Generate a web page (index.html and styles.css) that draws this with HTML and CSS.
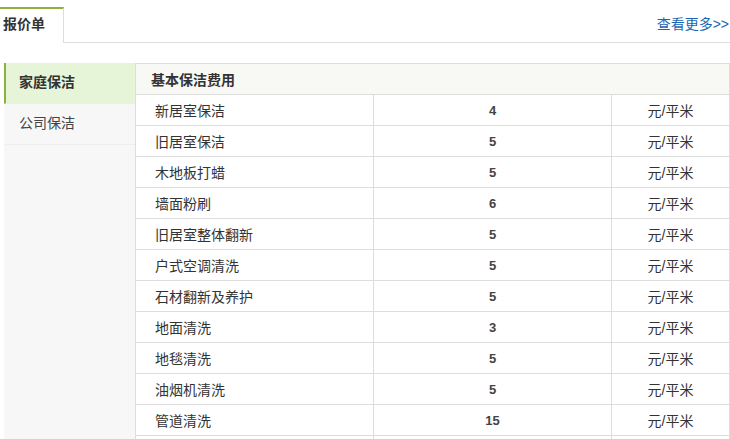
FILE: index.html
```html
<!DOCTYPE html>
<html lang="zh-CN">
<head>
<meta charset="utf-8">
<title>报价单</title>
<link rel="stylesheet" href="styles.css">
</head>
<body>
<div class="tabbar">
  <div class="tab">报价单</div>
  <div class="tab-rest"><a class="more" href="#">查看更多&gt;&gt;</a></div>
</div>
<div class="main">
  <ul class="side">
    <li class="side-item active">家庭保洁</li>
    <li class="side-item">公司保洁</li>
  </ul>
  <table class="price">
    <colgroup>
      <col class="c-name">
      <col class="c-num">
      <col class="c-unit">
    </colgroup>
    <thead>
      <tr><th colspan="3">基本保洁费用</th></tr>
    </thead>
    <tbody>
      <tr><td class="name">新居室保洁</td><td class="num">4</td><td class="unit">元/平米</td></tr>
      <tr><td class="name">旧居室保洁</td><td class="num">5</td><td class="unit">元/平米</td></tr>
      <tr><td class="name">木地板打蜡</td><td class="num">5</td><td class="unit">元/平米</td></tr>
      <tr><td class="name">墙面粉刷</td><td class="num">6</td><td class="unit">元/平米</td></tr>
      <tr><td class="name">旧居室整体翻新</td><td class="num">5</td><td class="unit">元/平米</td></tr>
      <tr><td class="name">户式空调清洗</td><td class="num">5</td><td class="unit">元/平米</td></tr>
      <tr><td class="name">石材翻新及养护</td><td class="num">5</td><td class="unit">元/平米</td></tr>
      <tr><td class="name">地面清洗</td><td class="num">3</td><td class="unit">元/平米</td></tr>
      <tr><td class="name">地毯清洗</td><td class="num">5</td><td class="unit">元/平米</td></tr>
      <tr><td class="name">油烟机清洗</td><td class="num">5</td><td class="unit">元/平米</td></tr>
      <tr><td class="name">管道清洗</td><td class="num">15</td><td class="unit">元/平米</td></tr>
      <tr class="blank"><td></td><td></td><td></td></tr>
    </tbody>
  </table>
</div>
</body>
</html>
```
FILE: styles.css
```css
html, body {
  margin: 0;
  padding: 0;
  background: #fff;
}
body {
  font-family: "Liberation Sans", "Noto Sans CJK SC", sans-serif;
  font-size: 14px;
  color: #333;
  overflow: hidden;
  height: 439px;
}
.tabbar {
  display: flex;
  padding-top: 7px;
  height: 43px;
  box-sizing: border-box;
}
.tab {
  width: 64px;
  box-sizing: border-box;
  border-top: 2px solid #8cb13f;
  border-right: 1px solid #ddd;
  padding-left: 3px;
  font-weight: bold;
  font-size: 14px;
  color: #333;
  line-height: 31px;
  height: 36px;
}
.tab-rest {
  flex: 1;
  border-bottom: 1px solid #ddd;
  display: flex;
  justify-content: flex-end;
}
.more {
  color: #1a66b3;
  text-decoration: none;
  font-size: 14px;
  line-height: 34px;
  padding-right: 1px;
}
.main {
  display: flex;
  margin-top: 20px;
  margin-left: 4px;
  height: 376px;
  overflow: hidden;
}
.side {
  list-style: none;
  margin: 0;
  padding: 0;
  width: 131px;
  background: #f7f7f7;
  height: 376px;
}
.side-item {
  height: 40px;
  line-height: 38px;
  padding-left: 14px;
  border-bottom: 1px solid #eee;
  border-left: 1px solid #f7f7f7;
  color: #444;
}
.side-item.active {
  background: #e6f4d8;
  border-left: 2px solid #8cb13f;
  padding-left: 13px;
  font-weight: bold;
  color: #333;
  border-bottom-color: #e6f4d8;
}
.price {
  width: 595px;
  border-collapse: collapse;
  table-layout: fixed;
  align-self: flex-start;
}
.c-name { width: 238px; }
.c-num { width: 238px; }
.price th, .price td {
  border: 1px solid #ddd;
  height: 31px;
  padding: 0;
  box-sizing: border-box;
}
.price th {
  height: 31px;
  background: #f8f8f5;
  text-align: left;
  padding-left: 15px;
  font-weight: bold;
  color: #333;
}
.price td.name {
  padding-left: 19px;
  color: #333;
}
.price td.num {
  text-align: center;
  font-weight: bold;
  font-size: 13px;
  color: #444;
}
.price td.unit {
  text-align: center;
  color: #333;
}
```
